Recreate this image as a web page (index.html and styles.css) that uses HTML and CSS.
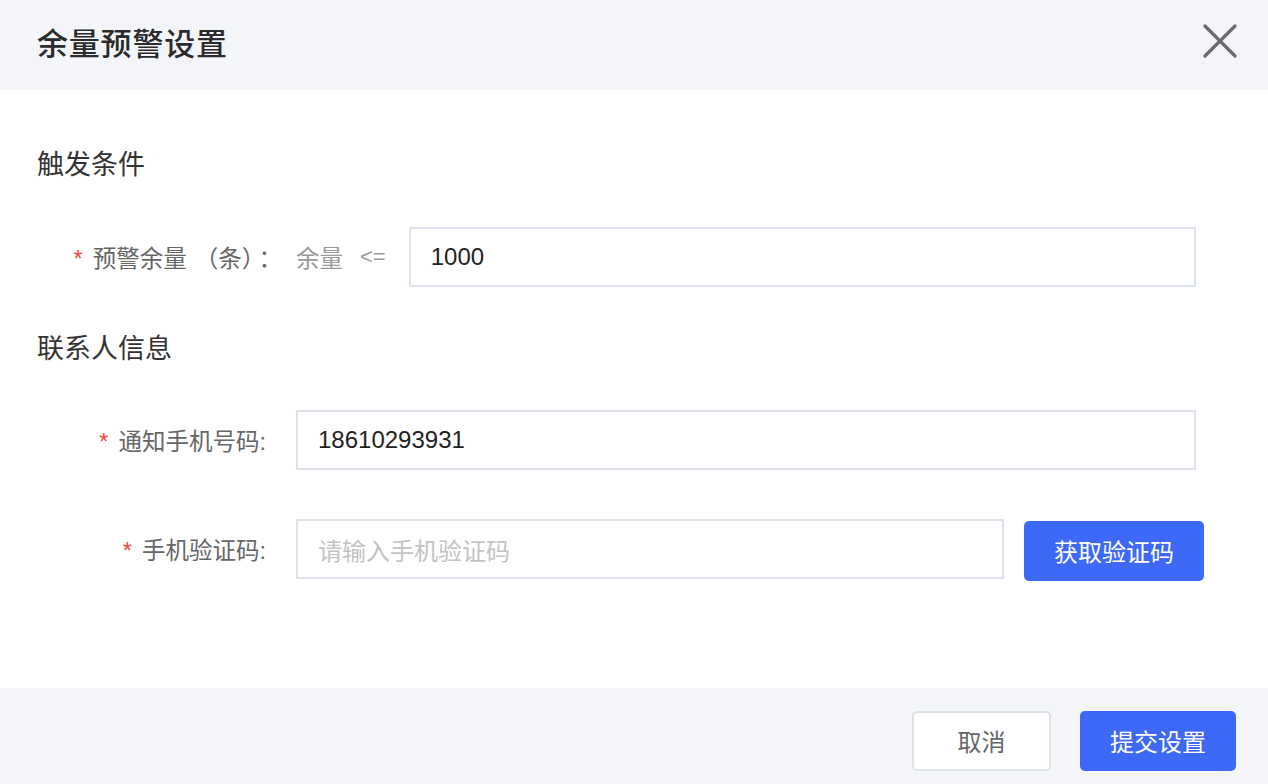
FILE: index.html
```html
<!DOCTYPE html>
<html lang="zh-CN">
<head>
<meta charset="utf-8">
<title>余量预警设置</title>
<link rel="stylesheet" href="styles.css">
</head>
<body>
<div class="dialog">
  <header class="dlg-header">
    <h1 class="dlg-title">余量预警设置</h1>
    <button class="dlg-close" aria-label="关闭">
      <svg width="34" height="34" viewBox="0 0 34 34"><path d="M2 2 L32 32 M32 2 L2 32" stroke="#6b6b6b" stroke-width="3.2" stroke-linecap="round" fill="none"/></svg>
    </button>
  </header>
  <main class="dlg-body">
    <h2 class="section-title">触发条件</h2>
    <div class="form-row row-threshold">
      <label class="form-label"><span class="req">*</span>预警余量<span class="paren">（条）</span>：</label>
      <span class="cond-text">余量</span>
      <span class="cond-op">&lt;=</span>
      <div class="input">1000</div>
    </div>
    <h2 class="section-title section-contact">联系人信息</h2>
    <div class="form-row row-phone">
      <label class="form-label"><span class="req">*</span>通知手机号码:</label>
      <div class="input">18610293931</div>
    </div>
    <div class="form-row row-code">
      <label class="form-label"><span class="req">*</span>手机验证码:</label>
      <div class="input input-code placeholder">请输入手机验证码</div>
      <button class="btn btn-primary btn-code">获取验证码</button>
    </div>
  </main>
  <footer class="dlg-footer">
    <button class="btn btn-default btn-cancel">取消</button>
    <button class="btn btn-primary btn-submit">提交设置</button>
  </footer>
</div>
</body>
</html>
```

FILE: styles.css
```css
* { box-sizing: border-box; }
html, body { margin: 0; padding: 0; }
body {
  font-family: "Liberation Sans", "Noto Sans CJK SC", sans-serif;
  color: #333;
  background: #fff;
  width: 1268px;
  height: 784px;
  overflow: hidden;
}
.dialog {
  display: flex;
  flex-direction: column;
  height: 784px;
}
.dlg-header {
  height: 90px;
  background: #f4f5f9;
  display: flex;
  align-items: center;
  justify-content: space-between;
  padding: 0 30px 8px 37px;
}
.dlg-title {
  margin: 0;
  font-size: 31px;
  font-weight: 500;
  color: #2b2b2b;
  letter-spacing: 0.8px;
}
.dlg-close {
  border: 0;
  background: transparent;
  padding: 0;
  width: 36px;
  height: 36px;
  display: flex;
  align-items: center;
  justify-content: center;
  cursor: pointer;
}
.dlg-body {
  flex: 1;
  padding: 55px 72px 0 37px;
}
.section-title {
  margin: 0;
  font-size: 27px;
  font-weight: 400;
  line-height: 40px;
  color: #333;
}
.form-row {
  display: flex;
  align-items: center;
  height: 60px;
  margin-top: 42px;
}
.section-contact { margin-top: 42px; }
.row-phone { margin-top: 41px; }
.row-code { margin-top: 49px; }
.form-label {
  width: 235px;
  text-align: right;
  font-size: 23.5px;
  color: #666;
  padding-right: 6px;
  flex: none;
}
.row-threshold .form-label { padding-right: 0; width: 245px; }
.paren { padding: 0 5px 0 8px; }
.req {
  color: #f0483e;
  margin-right: 10px;
}
.cond-text {
  margin-left: 14px;
  font-size: 23.5px;
  color: #999;
}
.cond-op {
  margin-left: 17px;
  font-size: 22px;
  color: #999;
}
.input {
  flex: 1;
  height: 60px;
  border: 2px solid #dde3ec;
  padding: 0 20px;
  display: flex;
  align-items: center;
  font-size: 24px;
  color: #222;
}
.row-threshold .input { margin-left: 23px; }
.row-phone .input, .row-code .input { margin-left: 24px; }
.input.placeholder { color: #c3c3c3; }
.input-code { flex: none; width: 708px; height: 60px; }
.btn {
  font-family: inherit;
  font-size: 24px;
  border-radius: 5px;
  cursor: pointer;
  height: 60px;
}
.btn-primary {
  background: #3e69f6;
  color: #fff;
  border: 0;
}
.btn-default {
  background: #fff;
  color: #666;
  border: 2px solid #dde1e8;
}
.btn-code {
  margin-left: 20px;
  width: 180px;
  margin-right: -8px;
  margin-top: 3px;
}
.dlg-footer {
  height: 96px;
  background: #f4f5f9;
  display: flex;
  align-items: center;
  justify-content: flex-end;
  padding: 9px 32px 0 0;
  gap: 29px;
}
.btn-cancel { width: 139px; }
.btn-submit { width: 156px; }
```
